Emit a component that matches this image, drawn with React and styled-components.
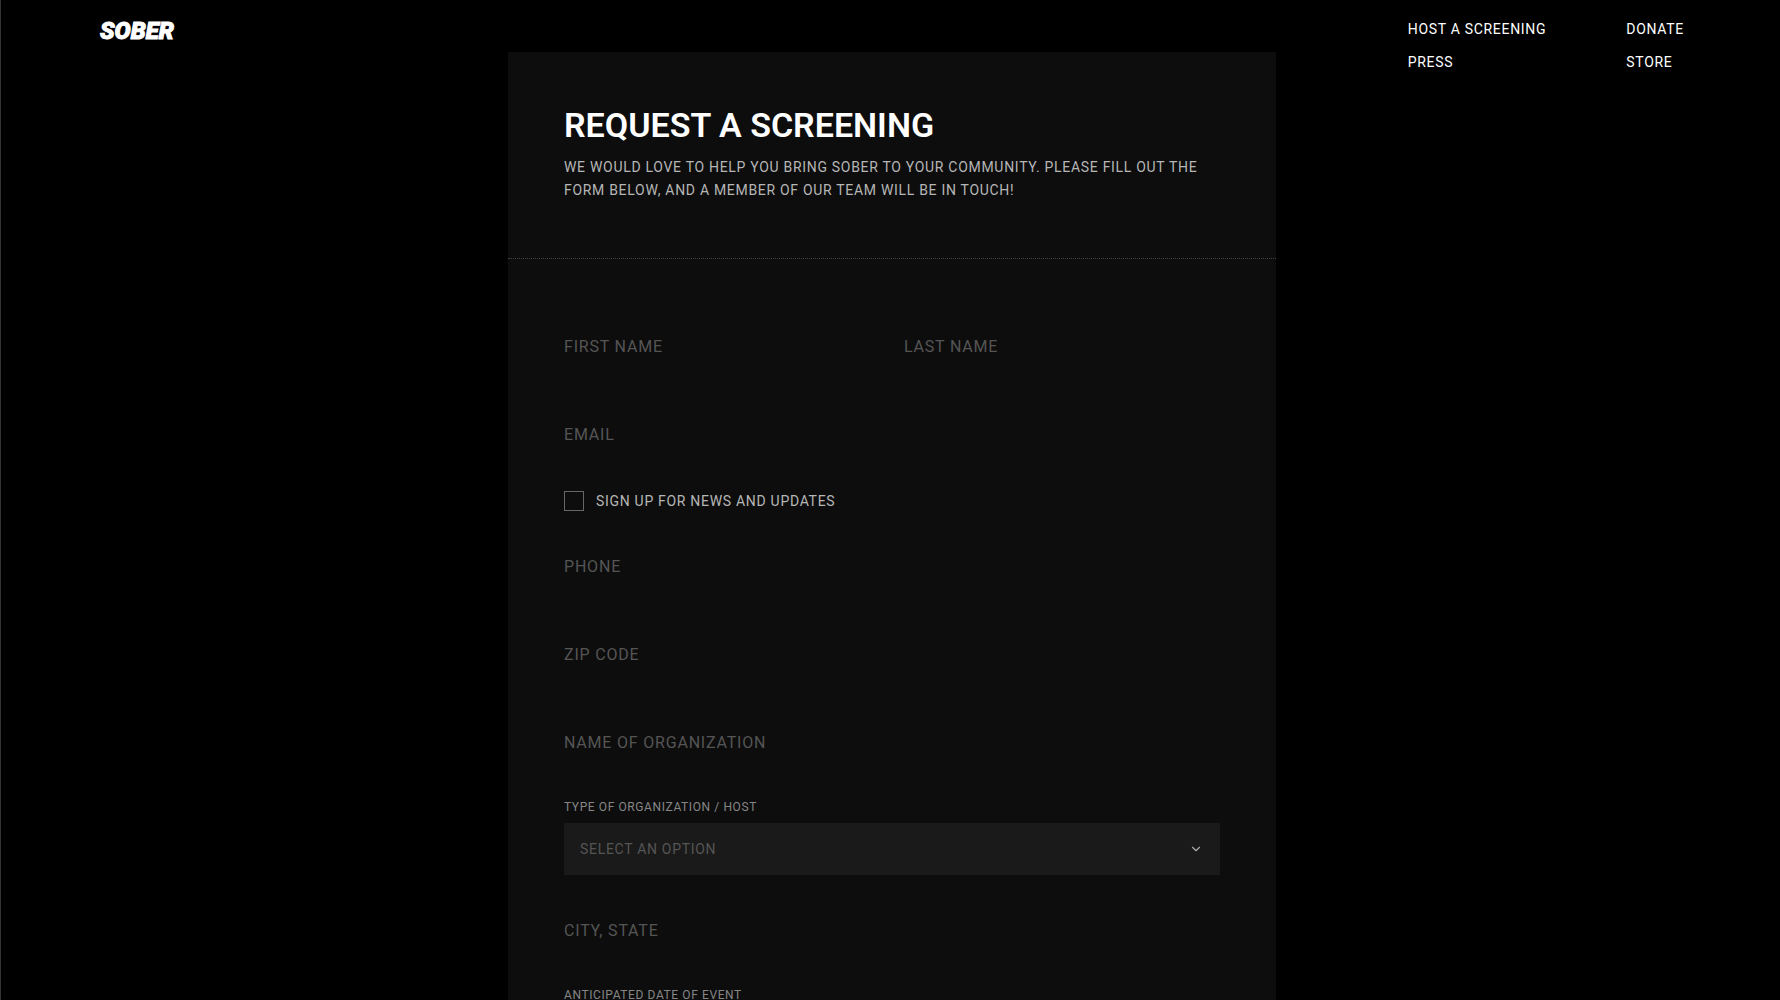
import React, { useState } from 'react';
import styled, { createGlobalStyle } from 'styled-components';
import { ChevronDown } from 'lucide-react';

const columns = [
    [
        { label: 'Host a screening', href: '#host' },
        { label: 'Press', href: '#press' },
    ],
    [
        { label: 'Donate', href: '#donate' },
        { label: 'Store', href: '#store' },
    ],
];

const hosts = ['School', 'Nonprofit', 'Community group', 'Other'];

const TextField = ({ id, label, type = 'text' }) => {
    const [value, setValue] = useState('');

    return (
        <Field>
            <FieldLabel htmlFor={id} $filled={value !== ''}>{label}</FieldLabel>
            <FieldInput
                id={id}
                name={id}
                type={type}
                value={value}
                onChange={e => setValue(e.target.value)}
            />
        </Field>
    )
}

const App = () => {
    const [host, setHost] = useState('');
    const [news, setNews] = useState(false);

    return (
        <Page>
            <GlobalStyle />
            <Header>
                <Logo href="#home">Sober</Logo>
                <Nav>
                    {columns.map((links, i) => (
                        <NavColumn key={i}>
                            {links.map(link => (
                                <NavLink key={link.href} href={link.href}>{link.label}</NavLink>
                            ))}
                        </NavColumn>
                    ))}
                </Nav>
            </Header>
            <Main>
                <Card>
                    <Intro>
                        <Title>Request a screening</Title>
                        <Lead>
                            We would love to help you bring Sober to your community. Please fill out the
                            form below, and a member of our team will be in touch!
                        </Lead>
                    </Intro>
                    <Form onSubmit={e => e.preventDefault()}>
                        <Row>
                            <TextField id="first-name" label="First name" />
                            <TextField id="last-name" label="Last name" />
                        </Row>
                        <TextField id="email" label="Email" type="email" />
                        <CheckLabel htmlFor="news">
                            <Checkbox
                                id="news"
                                type="checkbox"
                                checked={news}
                                onChange={e => setNews(e.target.checked)}
                            />
                            Sign up for news and updates
                        </CheckLabel>
                        <TextField id="phone" label="Phone" type="tel" />
                        <TextField id="zip" label="Zip code" />
                        <TextField id="organization" label="Name of organization" />
                        <Group>
                            <SmallLabel htmlFor="host">Type of organization / host</SmallLabel>
                            <SelectBox>
                                <Select id="host" value={host} onChange={e => setHost(e.target.value)}>
                                    <option value="">Select an option</option>
                                    {hosts.map(name => <option key={name} value={name}>{name}</option>)}
                                </Select>
                                <ChevronDown size={14} color="#aaa" strokeWidth={2} aria-hidden="true" />
                            </SelectBox>
                        </Group>
                        <TextField id="city" label="City, state" />
                        <Group>
                            <SmallLabel htmlFor="date">Anticipated date of event</SmallLabel>
                            <DateInput id="date" type="date" />
                        </Group>
                    </Form>
                </Card>
            </Main>
        </Page>
    )
}

export default App;

const GlobalStyle = createGlobalStyle`
* {
    box-sizing: border-box;
}
html {
    background: #000;
    scrollbar-width: none;
}
body {
    margin: 0;
    background: #000;
    color: #fff;
    font-family: Roboto, "Liberation Sans", sans-serif;
    font-size: 14px;
    text-transform: uppercase;
}
a, p, label, input, select {
    letter-spacing: 0.05em;
}
input, select {
    font: inherit;
    text-transform: inherit;
    border: 0;
    border-radius: 0;
    background: none;
    color: inherit;
    appearance: none;
    outline: none;
}
`;

const Page = styled.div`
min-height: 100vh;
border-left: 1px solid #333;
`;

/* the nav is taller than the bar and hangs down beside the card */
const Header = styled.header`
display: flex;
justify-content: space-between;
align-items: flex-start;
height: 52px;
padding: 17px 96px 0 99px;
`;

const Logo = styled.a`
color: #fff;
font-size: 24px;
font-style: italic;
font-weight: 900;
line-height: 28px;
letter-spacing: 0;
text-decoration: none;
-webkit-text-stroke: 1px #fff;
`;

const Nav = styled.nav`
display: flex;
gap: 80px;
`;

const NavColumn = styled.div`
display: flex;
flex-direction: column;
gap: 8px;
`;

const NavLink = styled.a`
color: #fff;
line-height: 25px;
text-decoration: none;
`;

const Main = styled.main`
padding-left: 3px;
`;

const Card = styled.div`
width: 100%;
max-width: 768px;
margin: 0 auto;
background: #0d0d0d;
`;

const Intro = styled.div`
padding: 48px 56px 56px;
border-bottom: 1px dotted #444;
`;

const Title = styled.h1`
margin: 0 0 6px;
font-size: 34px;
font-weight: 600;
line-height: 50px;
`;

const Lead = styled.p`
margin: 0;
color: #b6b6b6;
line-height: 23px;
`;

const Form = styled.form`
display: flex;
flex-direction: column;
gap: 32px;
padding: 60px 56px;
`;

const Row = styled.div`
display: grid;
grid-template-columns: 1fr 1fr;
gap: 24px;
`;

const Field = styled.div`
display: grid;
align-items: center;
height: 56px;
`;

const FieldLabel = styled.label`
grid-area: 1 / 1;
color: #555;
font-size: 16px;
line-height: 24px;
visibility: ${({ $filled }) => $filled ? 'hidden' : 'visible'};
`;

const FieldInput = styled.input`
grid-area: 1 / 1;
width: 100%;
height: 56px;
padding: 0;
font-size: 16px;
`;

const CheckLabel = styled.label`
display: flex;
align-items: center;
gap: 12px;
height: 20px;
margin: -4px 0;
color: #b6b6b6;
`;

const Checkbox = styled.input`
width: 20px;
height: 20px;
margin: 0;
border: 1px solid #666;

&:checked {
    background: #b6b6b6;
}
`;

const Group = styled.div`
display: flex;
flex-direction: column;
gap: 8px;
margin: -4px 0;
`;

const SmallLabel = styled.label`
color: #868686;
font-size: 12px;
line-height: 16px;
`;

const SelectBox = styled.div`
display: grid;
align-items: center;
background: #1a1a1a;

svg {
    grid-area: 1 / 1;
    justify-self: end;
    margin-right: 17px;
    pointer-events: none;
}
`;

const Select = styled.select`
grid-area: 1 / 1;
width: 100%;
height: 52px;
padding: 0 16px;
color: #555;
`;

const DateInput = styled.input`
height: 52px;
padding: 0 16px;
background: #1a1a1a;
color: #555;
`;
